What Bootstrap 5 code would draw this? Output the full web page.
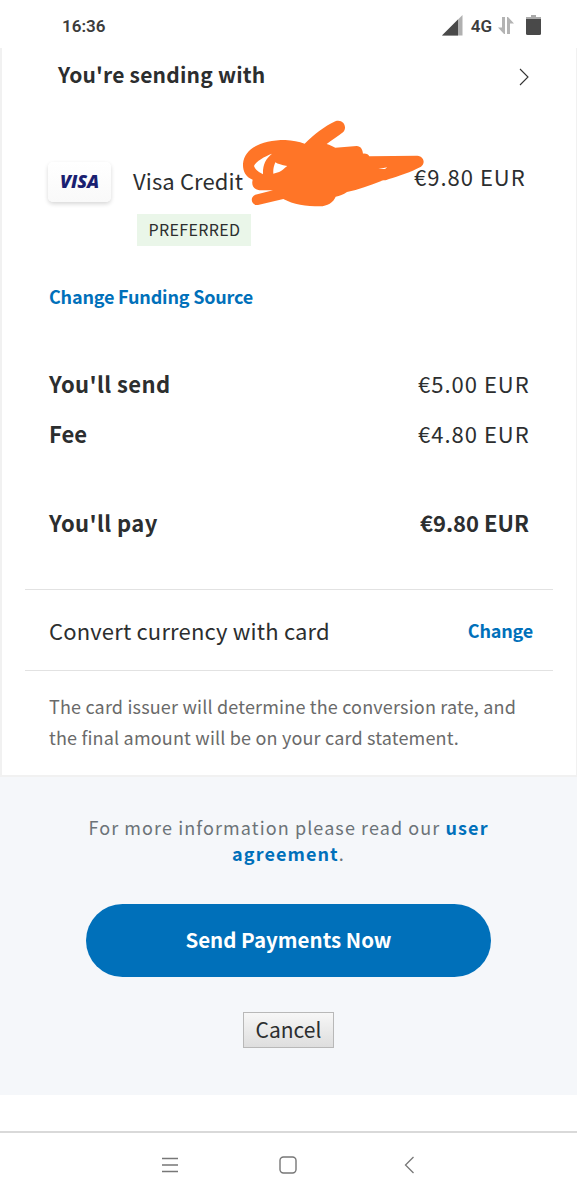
<!DOCTYPE html>
<html lang="en">
<head>
<meta charset="utf-8">
<meta name="viewport" content="width=device-width, initial-scale=1">
<title>Send payment</title>
<link href="https://cdn.jsdelivr.net/npm/bootstrap@5.3.0/dist/css/bootstrap.min.css" rel="stylesheet">
<style>
body{font-family:"Noto Sans CJK SC","Noto Sans",sans-serif;color:#2c2e2f;background:#fff;font-size:22px;line-height:30px;overflow-x:hidden}
svg{display:block;flex:none}
a{color:#0070ba;font-weight:700;text-decoration:none}
.status{height:48px;padding:4px 35px 0 62px;font-family:Roboto,sans-serif;font-weight:600;font-size:17px;color:#3c3c3c}
.status svg{margin-top:-2px}
.rat{margin:0 6px 0 8px;font-size:17px}
.sheet{height:729px;border:solid #f1f1f1;border-width:0 1px 2px 2px;padding:11px 23px 0}
.sheet-head{padding:0 24px 0 33px;font-size:21px;height:103px;letter-spacing:.2px}
.inset{padding:0 24px 0 24px}
.fund{height:119px;padding-right:28px;padding-left:23px}
.visa-tile{width:63px;height:40px;border-radius:5px;background:linear-gradient(#fff,#f9f9f9);box-shadow:0 2px 4px rgba(0,0,0,.16);font:italic 800 18px/38px "Open Sans",sans-serif;color:#1a1f71;letter-spacing:-.1px;margin-right:22px}
.fund-name{letter-spacing:.12px;margin-top:3px}
.pref{font-size:16px;letter-spacing:.35px;background:#eaf6e9;width:114px;height:32px;line-height:31px;margin:19px 0 0 4px;padding-left:11.500px}
.scribble{left:230px;top:110px}
.link-sm{font-size:18px;letter-spacing:-.19px}
.amt{letter-spacing:1px;margin-right:-.7px}
.fund .amt{margin-top:-1px}
.lbl{letter-spacing:.4px}
.rule-row{border:solid #e2e2e2;border-width:1px 0;height:82px;padding:0 20px 0 24px;letter-spacing:.17px}
.note{font-size:18px;line-height:30.5px;margin-top:20px;letter-spacing:.18px;color:#6a6a6a}
.foot{height:318px;background:#f5f7fa}
.info{font-size:18px;line-height:26px;letter-spacing:1.09px;color:#6c7378;padding-top:37px;height:127px}
.send{width:405px;height:73px;border-radius:37px;background:#0070ba;color:#fff;font-size:20.5px;font-weight:700;padding:0 0 2px}
.cancel{width:91px;height:36px;border:1px solid #b8b8b8;border-radius:0;background:linear-gradient(#f7f7f7,#dedede);font-size:21px;line-height:30px;margin-top:35px;padding:0 0 3px;color:#2c2e2f}
.sysnav{height:69px;border-top:2px solid #d9d9d9;margin-top:36px;padding:23px 162px 0 161px}
</style>
</head>
<body class="position-relative">
<header class="status d-flex align-items-center justify-content-between">
  <span>16:36</span>
  <span class="d-flex align-items-center">
    <svg width="21" height="21" viewBox="0 0 21 21"><path d="M0 20.5 20.5 0v20.5z" fill="#b0b0b0"/><path d="M0 20.5 16 4.5v16z" fill="#494949"/></svg>
    <span class="rat">4G</span>
    <svg width="16" height="17" viewBox="0 0 16 17" fill="#b3b3b3"><path d="M4 0h3v17H6L0 10.5h4zM9 0h1l6 6.500h-4V17H9z"/></svg>
    <svg class="ms-2" width="20" height="22" viewBox="-3 0 20 22"><path d="M6 1h5v2h5v3H1V3h5z" fill="#aaa"/><path d="M1 5h15v14.500q0 1.500-1.500 1.500h-12Q1 21 1 19.500z" fill="#494949"/></svg>
  </span>
</header>
<main>
  <section class="sheet">
    <div class="sheet-head d-flex justify-content-between">
      <strong>You're sending with</strong>
      <svg width="10" height="18" viewBox="0 0 10 18" style="margin-top:9px" fill="none" stroke="#333" stroke-width="1.1"><path d="m1 1 8 8-8 8"/></svg>
    </div>
    <div class="fund d-flex align-items-start">
      <div class="visa-tile text-center">VISA</div>
      <div class="flex-grow-1">
        <div class="fund-name">Visa Credit</div>
        <div class="pref">PREFERRED</div>
      </div>
      <span class="amt">€9.80 EUR</span>
    </div>
    <div class="inset link-sm" style="height:87px"><a href="#">Change Funding Source</a></div>
    <div class="inset d-flex justify-content-between" style="height:50px"><strong class="lbl">You'll send</strong><span class="amt">€5.00 EUR</span></div>
    <div class="inset d-flex justify-content-between" style="height:89px"><strong>Fee</strong><span class="amt">€4.80 EUR</span></div>
    <div class="inset d-flex justify-content-between" style="height:82px"><strong class="lbl">You'll pay</strong><strong>€9.80 EUR</strong></div>
    <div class="rule-row d-flex align-items-center justify-content-between"><span>Convert currency with card</span><a class="link-sm" href="#">Change</a></div>
    <p class="inset note mb-0 text-nowrap">The card issuer will determine the conversion rate, and<br>the final amount will be on your card statement.</p>
  </section>
  <section class="foot d-flex flex-column align-items-center">
    <p class="info text-center mb-0">For more information please read our <a href="#">user<br>agreement</a>.</p>
    <button class="btn send" type="button">Send Payments Now</button>
    <button class="btn cancel" type="button">Cancel</button>
  </section>
</main>
<nav class="sysnav d-flex justify-content-between">
  <svg width="18" height="18" viewBox="0 0 18 18" stroke="#777" stroke-width="1.300"><path d="M1 2.500h16M1 9h16M1 15.500h16"/></svg>
  <svg width="18" height="18" viewBox="0 0 18 18" fill="none" stroke="#777" stroke-width="1.400"><rect x="1" y="1" width="16" height="16" rx="3.500"/></svg>
  <svg width="18" height="18" viewBox="-7 0 18 18" fill="none" stroke="#777" stroke-width="1.300"><path d="M9.500 1 1.500 9l8 8"/></svg>
</nav>
<svg class="scribble position-absolute" width="320" height="110" viewBox="0 0 960 330"><path fill="#ff7527" fill-rule="evenodd" d="M224 101C250 76 284 48 316 34C339 26 354 51 339 67C326 78 305 91 290 102C300 105 308 109 316 113L380 108C392 108 398 119 399 131C409 130 416 134 418 139L562 137C582 139 587 160 573 170C545 185 504 199 477 207C466 213 459 209 454 213C420 227 385 239 351 246C340 254 329 257 317 260C310 278 292 288 270 289C229 289 189 283 160 267L84 285C64 288 58 261 76 254L129 241L88 241C69 238 64 225 68 209C46 201 38 183 39 161C43 114 96 90 166 90C187 91 207 95 224 101ZM126 131C104 139 78 154 72 168C76 181 89 187 99 193C98 165 106 147 126 131ZM136 157C144 162 154 165 172 168C159 176 160 185 130 191C129 178 131 169 136 157ZM445 177 472 172 465 177Z"/></svg>
<script src="https://cdn.jsdelivr.net/npm/bootstrap@5.3.0/dist/js/bootstrap.bundle.min.js"></script>
</body>
</html>
